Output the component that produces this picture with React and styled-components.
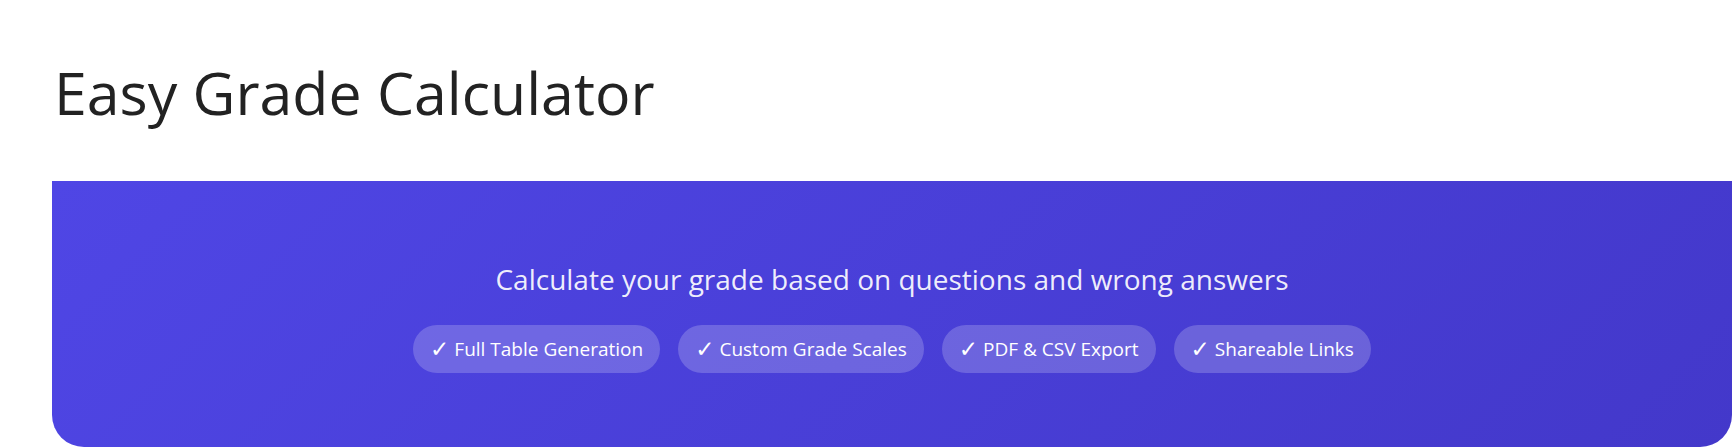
import styled, { createGlobalStyle } from 'styled-components'

const GlobalStyle = createGlobalStyle`
    html, body {
        margin: 0;
        padding: 0;
        background: #fff;
        font-family: "Open Sans", "Noto Sans", sans-serif;
    }
`

const Page = styled.div`
    padding: 0 3px 0 52px;
    overflow: hidden;
`

const Title = styled.h1`
    margin: 0;
    padding: 57px 0 0 2px;
    height: 181px;
    box-sizing: border-box;
    font-size: 59px;
    font-weight: 400;
    line-height: 1.2;
    color: #222;
`

const Hero = styled.header`
    height: 266px;
    border-radius: 0 0 32px 32px;
    background: linear-gradient(135deg, #4f46e5 0%, #4338ca 100%);
    color: #fff;
    display: flex;
    flex-direction: column;
    align-items: center;
    padding-top: 79px;
    box-sizing: border-box;
`

const Subtitle = styled.p`
    margin: 0 0 27px;
    font-size: 28px;
    line-height: 38px;
    color: rgba(255, 255, 255, 0.92);
`

const Features = styled.div`
    display: flex;
    gap: 18px;
`

const Pill = styled.span`
    height: 48px;
    padding: 0 17px;
    display: flex;
    align-items: center;
    gap: 5px;
    border-radius: 24px;
    background: rgba(255, 255, 255, 0.2);
    font-size: 19px;
    color: #fff;
`

const Check = styled.span`
    font-family: "DejaVu Sans", sans-serif;
    font-size: 23px;
    line-height: 1;
`

const features = ['Full Table Generation', 'Custom Grade Scales', 'PDF & CSV Export', 'Shareable Links']

const App = () => {
    return (
        <>
            <GlobalStyle />
            <Page>
                <Title>Easy Grade Calculator</Title>
                <Hero>
                    <Subtitle>Calculate your grade based on questions and wrong answers</Subtitle>
                    <Features>
                        {features.map((f) => (
                            <Pill key={f}>
                                <Check>✓</Check>
                                {f}
                            </Pill>
                        ))}
                    </Features>
                </Hero>
            </Page>
        </>
    )
}

export default App
